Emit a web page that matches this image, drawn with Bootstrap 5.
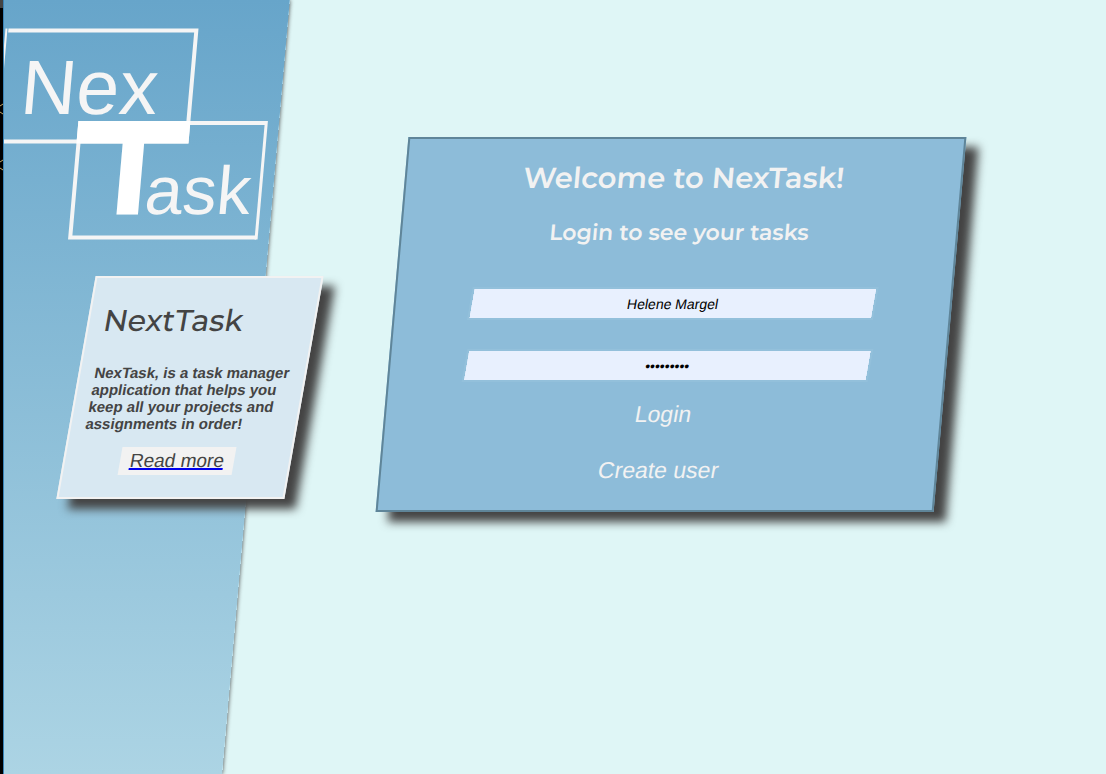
<!DOCTYPE html>
<html lang="en">
<head>
<meta charset="utf-8">
<meta name="viewport" content="width=device-width, initial-scale=1">
<title>NexTask</title>
<link href="https://cdn.jsdelivr.net/npm/bootstrap@5.3.0/dist/css/bootstrap.min.css" rel="stylesheet">
<style>
  body { background: #dff6f6; font-family: "Liberation Sans", Arial, sans-serif; color: #444; }
  .edge-strip { width: 3px; background: #000; border-top: 8px solid #444; }
  .stage { min-width: 0; overflow: hidden; }
  .side-panel { width: 253px; z-index: 1; }
  /* slanted backdrop of the side panel */
  .side-panel::before {
    content: ""; position: absolute; z-index: -1; inset: 0 0 0 -80px;
    transform: skewX(-5deg);
    background: linear-gradient(#67a5ca, #acd4e4);
    box-shadow: 0 0 4px #444;
  }
  .stage::before { content: ""; position: absolute; z-index: 2; inset: 0 auto 0 0; width: 1px; background: #3a84b8; }
  .brand-logo { width: 277px; height: 240px; }
  .brand-logo text { font-family: "Liberation Sans", Arial, sans-serif; fill: #f5f5f5; }
  .display-font { font-family: Montserrat, Inter, sans-serif; font-weight: 600; }
  .about-card {
    width: 228px; margin: 36px 0 0 73px; padding: 24px 8px 22px 14px;
    background: #d8e8f2; border: 2px solid #f2f2f2;
    box-shadow: 13px 10px 10px #444; transform: skewX(-10deg);
  }
  .about-card h2 { font-size: 30px; font-weight: 500; line-height: 38px; margin: 0 0 24px; }
  .about-card p { font-size: 15px; line-height: 17px; font-weight: 700; margin: 0 0 15px; }
  .about-action { padding-right: 6px; }
  .read-more { font-size: 19px; line-height: 28px; padding: 0 10px; background: #f2f2f2; color: #444; text-decoration: underline; text-decoration-color: #00e; text-decoration-thickness: 2px; text-underline-offset: 1px; }
  .login-area { padding: 137px 21px 40px 0; }
  .login-card {
    max-width: 558px; padding: 19px 20px 24px;
    background: #8dbcd9; border: 2px solid #5f8599; color: #f2f2f2;
    box-shadow: 13px 10px 10px #444; transform: skewX(-5deg);
  }
  .login-card h1 { font-size: 29px; line-height: 40px; margin: 0 0 19px; }
  .login-card h2 { font-size: 22px; line-height: 32px; margin: 0 0 38px; }
  .login-input {
    width: 406px; max-width: 100%; height: 33px; padding: 0 2px; margin-bottom: 29px;
    border: 2px solid #93c0db; background: #e8f0fe; background-clip: padding-box;
    color: #000; font-size: 14px; text-align: center; transform: skewX(-5deg);
  }
  .login-input.last { margin-bottom: 16px; }
  .text-action { border: 0; background: none; color: #f2f2f2; font-size: 23px; line-height: 32px; padding: 0 8px; transform: skewX(-5deg); }
</style>
</head>
<body>
<div class="d-flex min-vh-100">
  <div class="edge-strip flex-shrink-0">
    <svg class="d-block" width="3" height="170" viewBox="0 8 3 170" fill="none" aria-hidden="true">
      <path d="M3 104L0 106M0 112L3 114M3 160L0 162M0 168L3 170" stroke="#c9a766" stroke-width="1"/>
    </svg>
  </div>
  <div class="stage position-relative d-flex flex-grow-1">
    <aside class="side-panel position-relative flex-shrink-0">
      <svg class="brand-logo d-block" viewBox="3 0 277 240" role="img" aria-label="NexTask">
        <g transform="skewX(-5)">
          <g fill="none" stroke="#f5f5f5" stroke-width="4">
            <path d="M11 30.500H199V141.500H11" />
            <path d="M9 28.500V143" stroke-width="2"/>
            <path d="M277 123H91V237.500H277"/>
            <path d="M277 121V239.500" stroke-width="3"/>
          </g>
          <rect x="89" y="121" width="112" height="22.500" fill="#fff"/>
          <text x="29" y="114" font-size="77">Nex</text>
          <text x="146" y="213" font-size="128" font-weight="700" text-anchor="middle" style="fill:#fff" stroke="#fff" stroke-width="3">T</text>
          <text x="162" y="214" font-size="68">ask</text>
        </g>
      </svg>
      <section class="about-card">
        <h2 class="display-font">NextTask</h2>
        <p>NexTask, is a task manager application that helps you keep all your projects and assignments in order!</p>
        <div class="about-action text-center"><a class="read-more d-inline-block" href="#">Read more</a></div>
      </section>
    </aside>
    <main class="login-area d-flex flex-grow-1 justify-content-center align-items-start">
      <form class="login-card w-100 d-flex flex-column align-items-center">
        <h1 class="display-font">Welcome to NexTask!</h1>
        <h2 class="display-font">Login to see your tasks</h2>
        <input class="login-input" type="text" aria-label="Username" value="Helene Margel">
        <input class="login-input last" type="password" aria-label="Password" value="secret123">
        <button class="text-action mb-4" type="submit">Login</button>
        <button class="text-action" type="button">Create user</button>
      </form>
    </main>
  </div>
</div>
<script src="https://cdn.jsdelivr.net/npm/bootstrap@5.3.0/dist/js/bootstrap.bundle.min.js"></script>
</body>
</html>
